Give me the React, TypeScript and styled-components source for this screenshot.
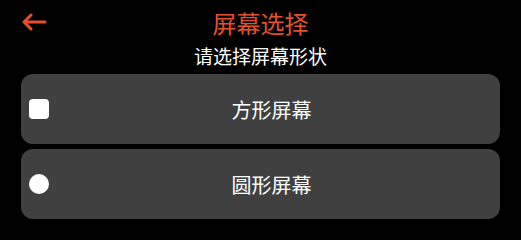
import React, { useState } from "react";
import styled, { createGlobalStyle } from "styled-components";

const GlobalStyle = createGlobalStyle`
  html, body {
    margin: 0;
    padding: 0;
    background: #000;
  }
  body {
    font-family: "Noto Sans CJK SC", "Noto Sans", sans-serif;
  }
`;

const accent = "#e4502c";

const Page = styled.div`
  height: 233px;
  box-sizing: border-box;
  padding: 0 21px;
  background: #000;
  display: flex;
  flex-direction: column;
`;

const Header = styled.div`
  height: 46px;
  display: grid;
  grid-template-columns: 1fr auto 1fr;
  align-items: center;
`;

const BackButton = styled.button`
  justify-self: start;
  background: none;
  border: none;
  padding: 0;
  width: 26px;
  height: 18px;
  display: flex;
  align-items: center;
  cursor: pointer;
  margin-top: -3px;
`;

const Title = styled.h1`
  margin: 0;
  font-size: 24px;
  font-weight: 400;
  line-height: 28px;
  color: ${accent};
`;

const Subtitle = styled.div`
  font-size: 19px;
  line-height: 20px;
  color: #fff;
  text-align: center;
`;

const Options = styled.div`
  margin-top: 8px;
  display: flex;
  flex-direction: column;
  gap: 5px;
`;

const OptionCard = styled.div`
  height: 70px;
  border-radius: 12px;
  background: #404040;
  display: flex;
  align-items: center;
  padding: 0 8px;
  cursor: pointer;
`;

const Shape = styled.span<{ $round?: boolean }>`
  width: 20px;
  height: 20px;
  flex: none;
  background: #fff;
  border-radius: ${(p) => (p.$round ? "50%" : "4px")};
`;

const Label = styled.span`
  flex: 1;
  text-align: center;
  font-size: 20px;
  color: #fff;
  padding-left: 2px;
`;

const BackArrow = () => (
  <svg width="26" height="18" viewBox="0 0 26 18">
    <path
      d="M24 9H3M10 2L3 9l7 7"
      fill="none"
      stroke={accent}
      strokeWidth="3"
      strokeLinecap="round"
      strokeLinejoin="round"
    />
  </svg>
);

const options = [
  { id: "square", label: "方形屏幕", round: false },
  { id: "round", label: "圆形屏幕", round: true },
];

const App: React.FC = () => {
  const [, setShape] = useState<string | null>(null);

  return (
    <>
      <GlobalStyle />
      <Page>
        <Header>
          <BackButton aria-label="返回">
            <BackArrow />
          </BackButton>
          <Title>屏幕选择</Title>
          <div />
        </Header>
        <Subtitle>请选择屏幕形状</Subtitle>
        <Options>
          {options.map((o) => (
            <OptionCard key={o.id} onClick={() => setShape(o.id)}>
              <Shape $round={o.round} />
              <Label>{o.label}</Label>
            </OptionCard>
          ))}
        </Options>
      </Page>
    </>
  );
};

export default App;
